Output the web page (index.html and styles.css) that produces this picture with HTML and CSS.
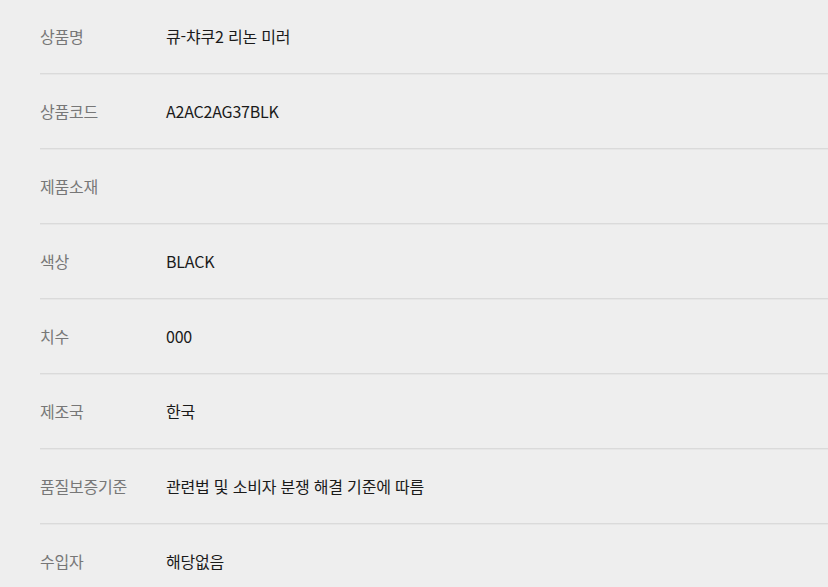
FILE: index.html
```html
<!DOCTYPE html>
<html lang="ko">
<head>
    <meta charset="UTF-8">
    <meta name="viewport" content="width=device-width, initial-scale=1.0">
    <title>상품정보</title>
    <link rel="stylesheet" href="styles.css">
</head>
<body>
    <dl class="info-table">
        <div class="info-row">
            <dt>상품명</dt>
            <dd>큐-챠쿠2 리논 미러</dd>
        </div>
        <div class="info-row">
            <dt>상품코드</dt>
            <dd>A2AC2AG37BLK</dd>
        </div>
        <div class="info-row">
            <dt>제품소재</dt>
            <dd></dd>
        </div>
        <div class="info-row">
            <dt>색상</dt>
            <dd>BLACK</dd>
        </div>
        <div class="info-row">
            <dt>치수</dt>
            <dd>000</dd>
        </div>
        <div class="info-row">
            <dt>제조국</dt>
            <dd>한국</dd>
        </div>
        <div class="info-row">
            <dt>품질보증기준</dt>
            <dd>관련법 및 소비자 분쟁 해결 기준에 따름</dd>
        </div>
        <div class="info-row">
            <dt>수입자</dt>
            <dd>해당없음</dd>
        </div>
    </dl>
</body>
</html>
```

FILE: styles.css
```css
body {
    margin: 0;
    padding: 0;
    background-color: #eeeeee;
    font-family: "Noto Sans CJK KR", "Noto Sans", sans-serif;
    font-size: 16px;
    letter-spacing: -0.2px;
    color: #222;
}
.info-table {
    margin: -1px 0 0 0;
    padding-left: 40px;
}
.info-row {
    display: flex;
    align-items: center;
    height: 74px;
    border-bottom: 1px solid #dadada;
    box-shadow: 0 1px 0 #e6e6e6;
}
.info-row dt {
    width: 126px;
    flex-shrink: 0;
    color: #777;
}
.info-row dd {
    margin: 0;
    color: #1a1a1a;
}
```
